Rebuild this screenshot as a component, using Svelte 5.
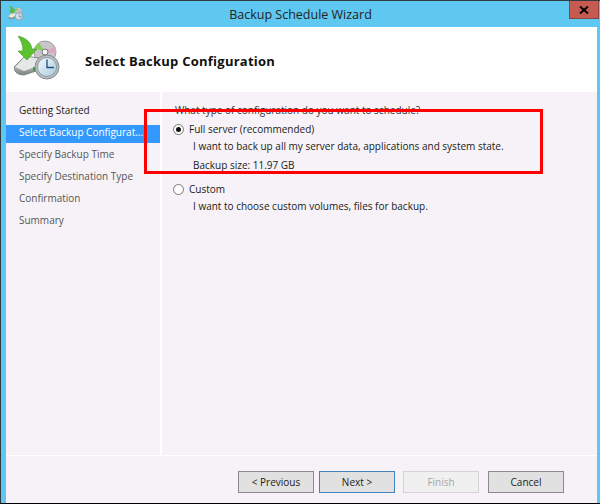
<script>
  const steps = ['Getting Started', 'Select Backup Configurat...', 'Specify Backup Time', 'Specify Destination Type', 'Confirmation', 'Summary']
  const current = 1
</script>

{#snippet backupIcon(size)}
  <svg width={size} height={size} viewBox="0 0 48 48">
    <defs>
      <linearGradient id="disk" x1="0" y1="0" x2="0" y2="1">
        <stop offset="0" stop-color="#eef0f0" />
        <stop offset="1" stop-color="#7d8283" />
      </linearGradient>
      <linearGradient id="face" x1="0" y1="0" x2="1" y2="1">
        <stop offset="0" stop-color="#f4f9fc" />
        <stop offset="1" stop-color="#a9cbe0" />
      </linearGradient>
    </defs>
    <circle cx="31" cy="16" r="11" fill="#c9c6cb" stroke="#8f8d90" stroke-width=".8" />
    <path d="M31 16 L21 12 A11 11 0 0 1 25 7 Z" fill="#7fd04a" />
    <path d="M31 16 L41 10 A11 11 0 0 1 42 17 Z" fill="#d9a7c4" />
    <circle cx="31" cy="16" r="3" fill="#f2f2f2" stroke="#77777a" stroke-width="1" />
    <path d="M0 31 L11 20 L25 22 L25 34 L10 39 C4 39 0 36 0 31 Z" fill="url(#disk)" stroke="#6f7475" stroke-width=".8" />
    <path d="M1 31 L10 35 L24 30 L24 23 L12 21 Z" fill="#e6e8e8" />
    <rect x="19" y="31" width="3" height="4" fill="#3aa23c" />
    <path d="M4 0 C12 2 17 6 18 13 L23 13 L13 24 L4 15 L9 15 C9 9 7 4 4 0 Z" fill="#5cc12d" stroke="#3c9a1e" stroke-width=".6" />
    <circle cx="33" cy="31" r="12" fill="#b9bdc0" stroke="#85898c" stroke-width="1" />
    <circle cx="33" cy="31" r="9.5" fill="url(#face)" stroke="#6d8494" stroke-width=".7" />
    <path d="M33 23.5 V31.5 H40" fill="none" stroke="#1d4f7a" stroke-width="1.3" />
  </svg>
{/snippet}

<div class="window">
  <div class="titlebar">
    <span class="title-icon">{@render backupIcon(16)}</span>
    <span class="title">Backup Schedule Wizard</span>
    <button class="close" aria-label="Close">
      <svg width="10" height="8" viewBox="0 0 10 8"><path d="M1 .5 L9 7.5 M9 .5 L1 7.5" stroke="#000" stroke-width="2" /></svg>
    </button>
  </div>

  <div class="client">
    <header>
      {@render backupIcon(48)}
      <h1>Select Backup Configuration</h1>
    </header>

    <div class="middle">
      <nav>
        {#each steps as step, i}
          <div class="step" class:current={i === current} class:done={i === 0}>{step}</div>
        {/each}
      </nav>

      <main>
        <p class="question">What type of configuration do you want to schedule?</p>

        <div class="option">
          <span class="radio checked"></span>
          <span>Full server (recommended)</span>
        </div>
        <p class="desc">I want to back up all my server data, applications and system state.</p>
        <p class="size">Backup size: 11.97 GB</p>

        <div class="option custom">
          <span class="radio"></span>
          <span>Custom</span>
        </div>
        <p class="desc">I want to choose custom volumes, files for backup.</p>
      </main>
    </div>

    <footer>
      <button>&lt; Previous</button>
      <button class="default">Next &gt;</button>
      <button class="finish" disabled>Finish</button>
      <button>Cancel</button>
    </footer>
  </div>

  <div class="highlight"></div>
</div>

<style>
  :global(body) {
    margin: 0;
  }
  .window {
    position: relative;
    box-sizing: border-box;
    width: 600px;
    height: 504px;
    display: flex;
    flex-direction: column;
    background: #5fc8f0;
    border-top: 1px solid #2f3a40;
    border-left: 1px solid #2f3a40;
    border-bottom: 1px solid #000;
    font-family: "Open Sans", "Noto Sans", sans-serif;
    font-size: 10px;
    color: #1a1a1a;
  }
  .titlebar {
    height: 26px;
    flex: none;
    display: flex;
    align-items: center;
    justify-content: center;
    position: relative;
  }
  .title-icon {
    position: absolute;
    left: 7px;
    top: 5px;
    line-height: 0;
  }
  .title {
    font-size: 12.5px;
    color: #222;
  }
  .close {
    position: absolute;
    right: 1px;
    top: 0;
    width: 30px;
    height: 18px;
    padding: 0;
    display: flex;
    align-items: center;
    justify-content: center;
    background: #c75b52;
    border: 1px solid #8d4640;
    border-top: none;
  }
  .client {
    flex: 1;
    margin: 0 3px 0 5px;
    display: flex;
    flex-direction: column;
    min-height: 0;
    background: #f6f2f7;
  }
  header {
    height: 65px;
    flex: none;
    display: flex;
    align-items: center;
    gap: 23px;
    padding-left: 8px;
    background: #fff;
  }
  h1 {
    margin: 2px 0 0;
    font-size: 13px;
    font-weight: 700;
    letter-spacing: .25px;
    color: #111;
  }
  .middle {
    flex: 1;
    display: flex;
    min-height: 0;
    border-bottom: 1px solid #fff;
  }
  nav {
    width: 154px;
    flex: none;
    display: flex;
    flex-direction: column;
    gap: 4px;
    padding-top: 11px;
    border-right: 2px solid #fff;
  }
  .step {
    height: 18px;
    line-height: 14px;
    padding-left: 13px;
    color: #555;
    white-space: nowrap;
    overflow: hidden;
  }
  .step.done {
    color: #222;
  }
  .step.current {
    background: #3399ff;
    color: #fff;
  }
  main {
    flex: 1;
    padding: 11px 0 0 11px;
    min-width: 0;
  }
  p {
    margin: 0;
    white-space: nowrap;
  }
  .question {
    margin-left: 2px;
    line-height: 14px;
    color: #333;
  }
  .option {
    display: flex;
    align-items: center;
    gap: 5px;
    height: 14px;
    margin-top: 5px;
  }
  .option.custom {
    margin-top: 10px;
  }
  .radio {
    box-sizing: border-box;
    width: 11px;
    height: 11px;
    border: 1px solid #777;
    border-radius: 50%;
    background: #fff;
    position: relative;
    flex: none;
  }
  .radio.checked::after {
    content: "";
    position: absolute;
    left: 2px;
    top: 2px;
    width: 5px;
    height: 5px;
    border-radius: 50%;
    background: #111;
  }
  .desc {
    margin: 3px 0 0 20px;
    line-height: 14px;
  }
  .size {
    margin: 5px 0 0 20px;
    line-height: 14px;
  }
  footer {
    height: 47px;
    flex: none;
    display: flex;
    gap: 5px;
    padding: 15px 0 0 232px;
    box-sizing: border-box;
  }
  button {
    font: inherit;
    color: #222;
  }
  footer button {
    box-sizing: border-box;
    width: 76px;
    height: 22px;
    padding: 0;
    background: #e1e1e1;
    border: 1px solid #8a8a8a;
  }
  footer button.default {
    border-color: #3f86bd;
    margin-right: 3px;
  }
  footer button.finish {
    background: #f0f0f0;
    border-color: #d4d4d4;
    color: #a6a6a6;
    margin-right: 4px;
  }
  /* annotation drawn over the screenshot */
  .highlight {
    position: absolute;
    left: 143px;
    top: 108px;
    width: 399px;
    height: 65px;
    box-sizing: border-box;
    border: 3px solid #f00;
    pointer-events: none;
  }
</style>
